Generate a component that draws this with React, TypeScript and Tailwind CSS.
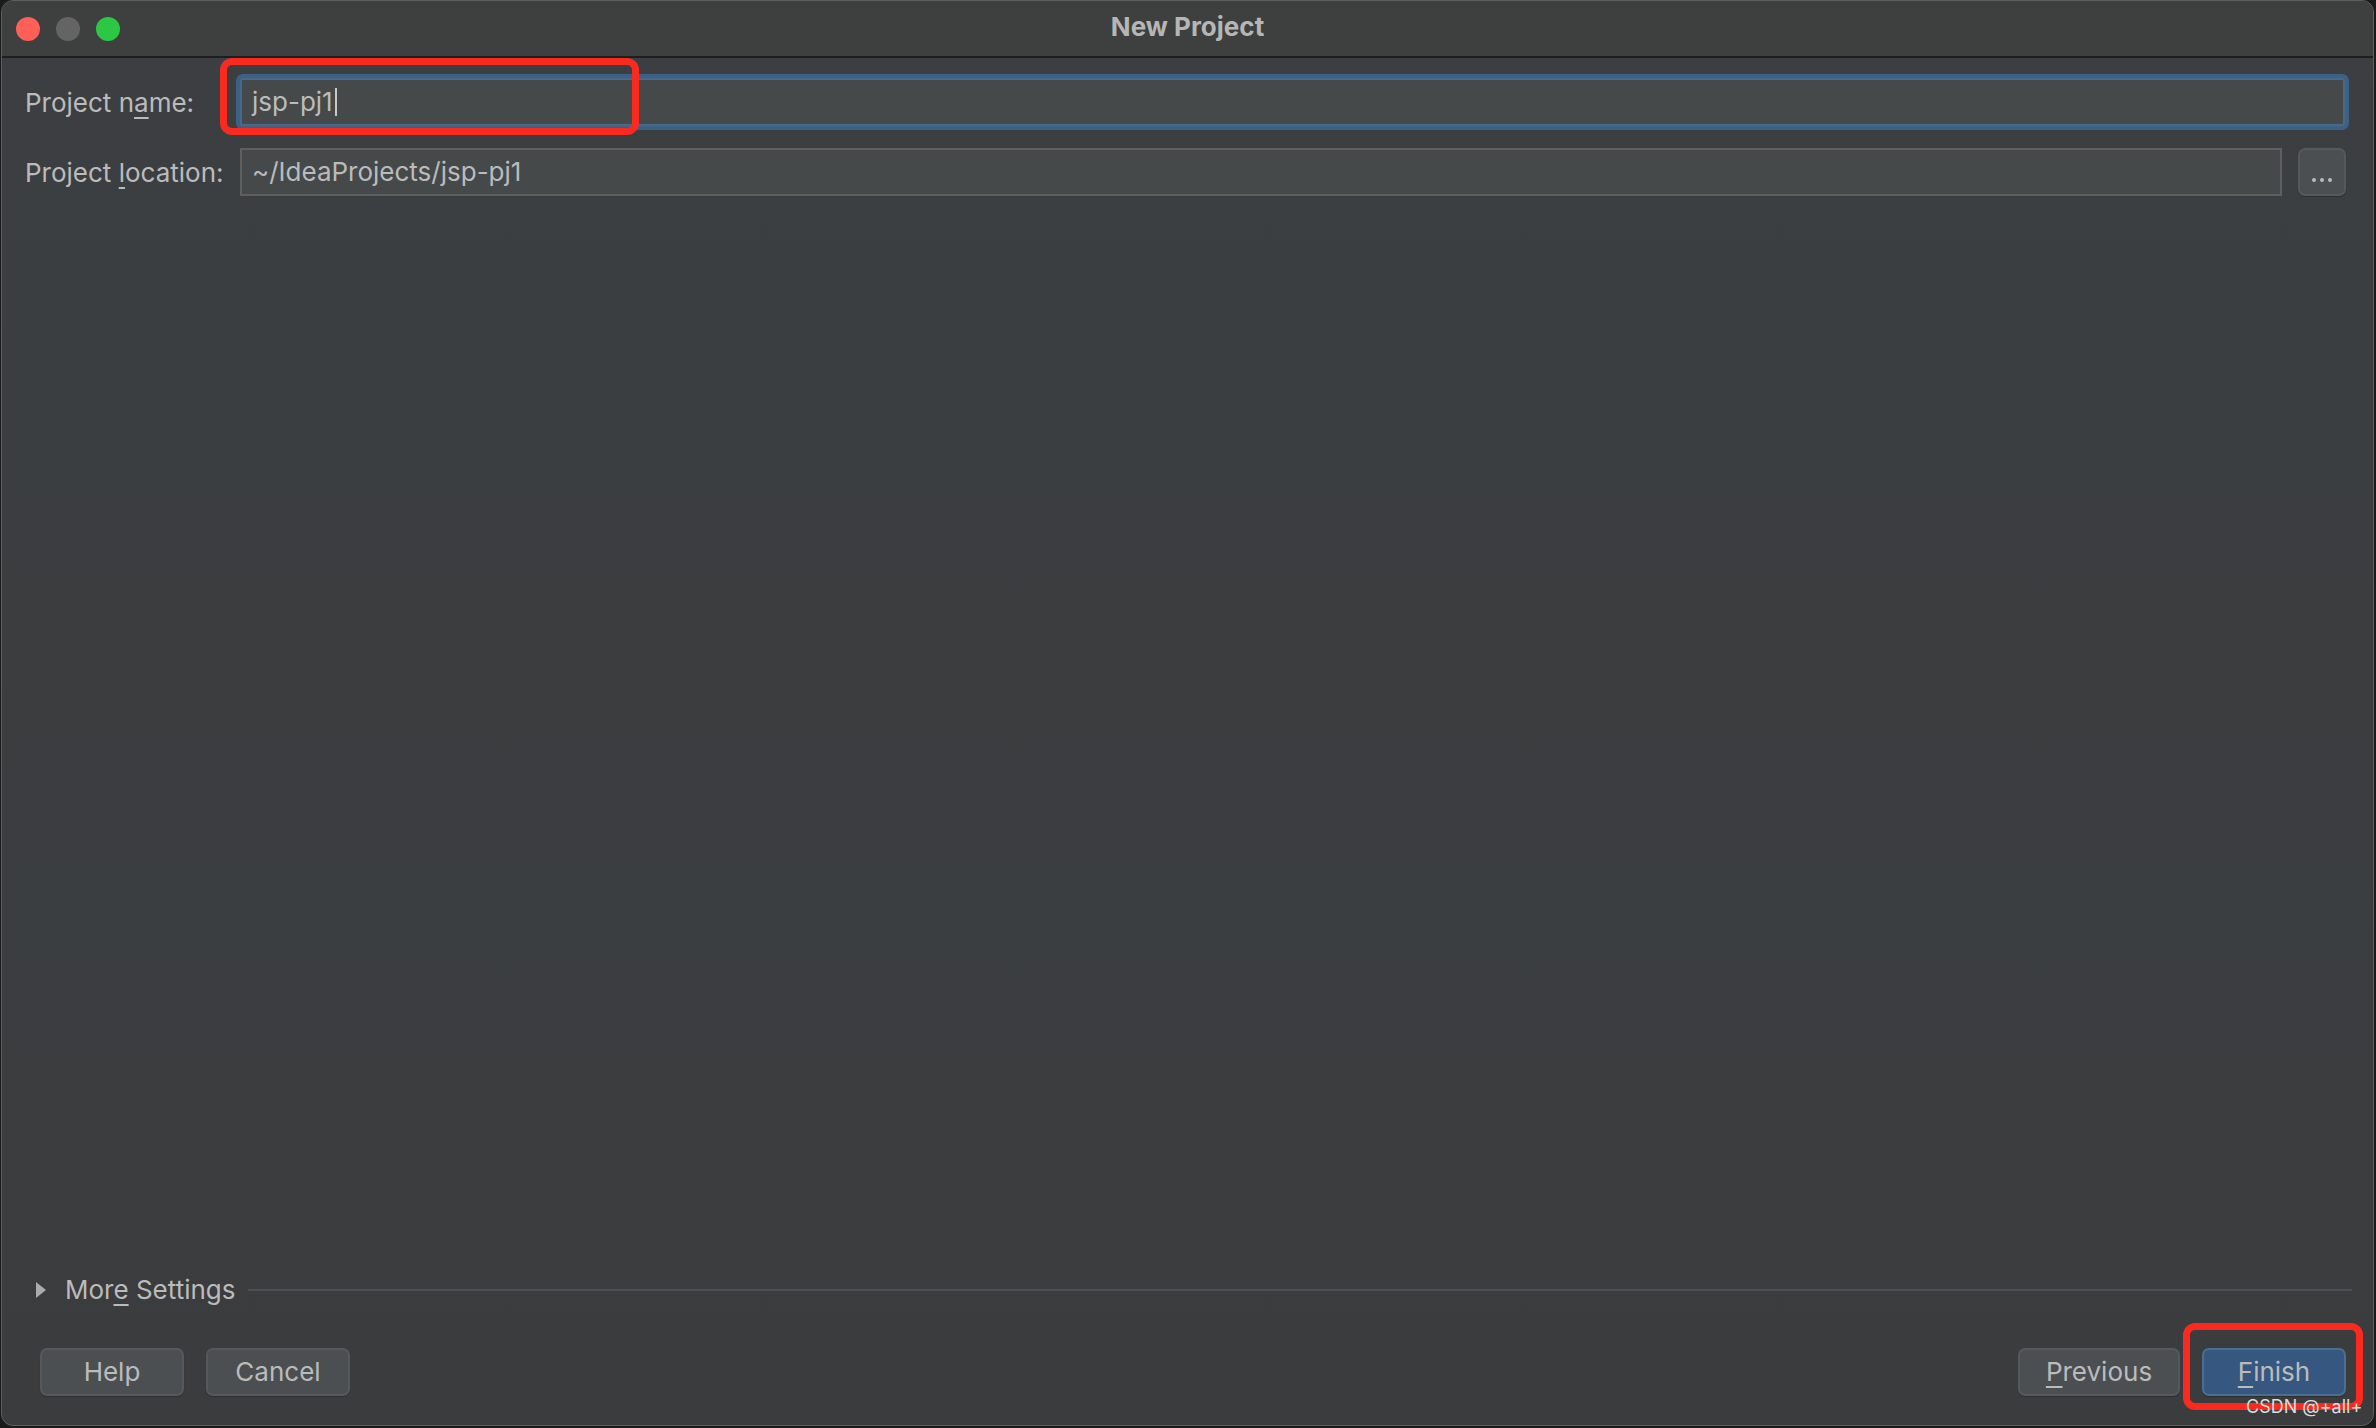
import React from "react";

function Btn({
  children,
  w,
  primary,
}: {
  children: React.ReactNode;
  w: string;
  primary?: boolean;
}) {
  return (
    <div
      className={
        "h-[48px] rounded-[7px] border-2 flex items-center justify-center text-[26px] leading-none text-[#bbbbbb] shadow-[0_1px_1px_rgba(0,0,0,0.25)] " +
        w +
        " " +
        (primary
          ? "bg-[#365880] border-[#4a6f93]"
          : "bg-[#4b4f51] border-[#56595c]")
      }
    >
      {children}
    </div>
  );
}

const U = ({ children }: { children: React.ReactNode }) => (
  <span className="underline decoration-[2px] underline-offset-[5px]">
    {children}
  </span>
);

export default function App() {
  return (
    <div className="relative w-[2376px] h-[1428px] overflow-hidden bg-[#1b1b1b] font-['Inter','Noto_Sans',sans-serif]">
      <div className="ml-[1px] w-[2373px] h-[1426px] rounded-[12px] border border-[#5e5e5e] overflow-hidden flex flex-col bg-gradient-to-b from-[#3c3f41] to-[#3a3c3e]">
        {/* Title bar */}
        <div className="h-[57px] shrink-0 bg-[#3e3f3f] border-b-2 border-[#1d1e1f] grid grid-cols-[1fr_auto_1fr] items-center">
          <div className="flex items-center gap-[16px] pl-[14px]">
            <div className="w-[24px] h-[24px] rounded-full bg-[#fe5f57]" />
            <div className="w-[24px] h-[24px] rounded-full bg-[#646464]" />
            <div className="w-[24px] h-[24px] rounded-full bg-[#2dc843]" />
          </div>
          <div className="text-[26px] font-bold text-[#b5b6b5] leading-none pb-[3px]">
            New Project
          </div>
          <div />
        </div>

        {/* Form */}
        <div className="flex flex-col gap-[22px] pt-[20px] pl-[23px] pr-[27px]">
          <div className="flex items-center">
            <div className="w-[199px] shrink-0 text-[26px] text-[#bbbbbb] leading-none pt-[1px]">
              Project n<U>a</U>me:
            </div>
            <div className="ml-[16px] flex-1 mr-[1px] h-[48px] rounded-[3px] border-2 border-[#47698e] ring-4 ring-[#3d6185] bg-[#45494a] flex items-center pl-[10px] text-[26px] text-[#bbbbbb] leading-none">
              <span>jsp-pj1</span>
              <span className="ml-[2px] w-[2px] h-[28px] bg-[#c8c8c8]" />
            </div>
          </div>
          <div className="flex items-center">
            <div className="w-[199px] shrink-0 text-[26px] text-[#bbbbbb] leading-none pt-[1px]">
              Project <U>l</U>ocation:
            </div>
            <div className="ml-[16px] flex-1 h-[48px] border-2 border-[#5e6060] bg-[#45494a] flex items-center pl-[10px] text-[26px] text-[#bbbbbb] leading-none">
              ~/IdeaProjects/jsp-pj1
            </div>
            <div className="ml-[16px] w-[48px] h-[48px] shrink-0 rounded-[7px] border-2 border-[#56595c] bg-[#4b4f51] flex items-end justify-center gap-[4px] pb-[12px] shadow-[0_1px_1px_rgba(0,0,0,0.25)]">
              <div className="w-[4px] h-[4px] rounded-full bg-[#bbbbbb]" />
              <div className="w-[4px] h-[4px] rounded-full bg-[#bbbbbb]" />
              <div className="w-[4px] h-[4px] rounded-full bg-[#bbbbbb]" />
            </div>
          </div>
        </div>

        <div className="flex-1" />

        {/* More Settings */}
        <div className="h-[30px] flex items-center pl-[34px] pr-[21px] mb-[43px]">
          <svg width="10" height="16" viewBox="0 0 10 16" className="shrink-0">
            <path d="M0 0 L10 8 L0 16 Z" fill="#a9abad" />
          </svg>
          <div className="ml-[19px] text-[26px] text-[#bbbbbb] leading-none whitespace-nowrap">
            Mor<U>e</U> Settings
          </div>
          <div className="ml-[13px] flex-1 h-[2px] bg-[#4e5153]" />
        </div>

        {/* Buttons */}
        <div className="flex items-center pl-[38px] pr-[27px] pb-[29px]">
          <Btn w="w-[144px]">Help</Btn>
          <div className="ml-[22px]">
            <Btn w="w-[144px]">Cancel</Btn>
          </div>
          <div className="flex-1" />
          <Btn w="w-[162px]">
            <U>P</U>revious
          </Btn>
          <div className="ml-[22px]">
            <Btn w="w-[144px]" primary>
              <U>F</U>inish
            </Btn>
          </div>
        </div>
      </div>

      {/* Red annotation boxes */}
      <div className="absolute left-[220px] top-[58px] w-[419px] h-[77px] rounded-[12px] border-[7px] border-[#fb2a1f]" />
      <div className="absolute left-[2183px] top-[1323px] w-[180px] h-[87px] rounded-[12px] border-[7px] border-[#fb2a1f]" />

      {/* Watermark */}
      <div className="absolute left-[2246px] top-[1398px] text-[18px] leading-none text-[#dcdcdc] whitespace-nowrap">
        CSDN @+all+
      </div>
    </div>
  );
}
